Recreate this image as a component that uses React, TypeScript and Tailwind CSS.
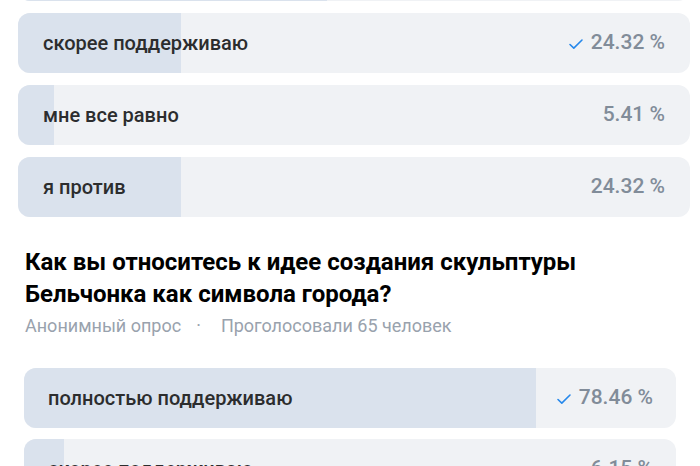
import React from "react";

type Option = {
  label: string;
  percent: number;
  voted?: boolean;
};

const firstPoll: Option[] = [
  { label: "полностью поддерживаю", percent: 45.95 },
  { label: "скорее поддерживаю", percent: 24.32, voted: true },
  { label: "мне все равно", percent: 5.41 },
  { label: "я против", percent: 24.32 },
];

const secondPoll: Option[] = [
  { label: "полностью поддерживаю", percent: 78.46, voted: true },
  { label: "скорее поддерживаю", percent: 6.15 },
  { label: "мне все равно", percent: 4.62 },
  { label: "я против", percent: 10.77 },
];

const Check = () => (
  <svg width="16" height="16" viewBox="0 0 16 16" fill="none" className="mr-[7px] mt-[2px]">
    <path d="M2 8.5l3.8 3.6L14 4" stroke="#2688eb" strokeWidth="1.6" strokeLinecap="round" strokeLinejoin="round" />
  </svg>
);

// single answer row with the result bar drawn behind the text
const PollOption = ({ option, pad }: { option: Option; pad: string }) => (
  <div className="relative h-[60px] rounded-[12px] bg-[#f0f2f5] overflow-hidden">
    <div
      className="absolute left-0 top-0 bottom-0 bg-[#dae2ed]"
      style={{ width: `${option.percent}%` }}
    />
    <div className={`relative h-full flex items-center justify-between ${pad}`}>
      <span className="text-[20px] font-medium text-[#2c2d2e] font-['Roboto',sans-serif]">
        {option.label}
      </span>
      <span className="flex items-center text-[21px] font-medium text-[#818c99] font-['Roboto',sans-serif]">
        {option.voted && <Check />}
        {option.percent.toFixed(2)} %
      </span>
    </div>
  </div>
);

export default function App() {
  return (
    <div className="w-[700px] h-[466px] overflow-hidden bg-white">
      <div className="-mt-[59px] px-[18px] pr-[10px] flex flex-col gap-[12px]">
        {firstPoll.map((o) => (
          <PollOption key={o.label} option={o} pad="pl-[25px] pr-[25px]" />
        ))}
      </div>

      <div className="px-[25px] pt-[29px]">
        <h2 className="text-[24px] leading-[32px] font-bold text-black font-['Roboto',sans-serif]">
          Как вы относитесь к идее создания скульптуры
          <br />
          Бельчонка как символа города?
        </h2>
        <div className="mt-[2px] flex items-center text-[18px] text-[#99a2ad] font-['Roboto',sans-serif]">
          <span>Анонимный опрос</span>
          <span className="ml-[15px] mr-[20px]">·</span>
          <span>Проголосовали 65 человек</span>
        </div>
      </div>

      <div className="mt-[29px] pl-[24px] pr-[24px] flex flex-col gap-[11px]">
        {secondPoll.map((o) => (
          <PollOption key={o.label} option={o} pad="pl-[24px] pr-[23px]" />
        ))}
      </div>
    </div>
  );
}
